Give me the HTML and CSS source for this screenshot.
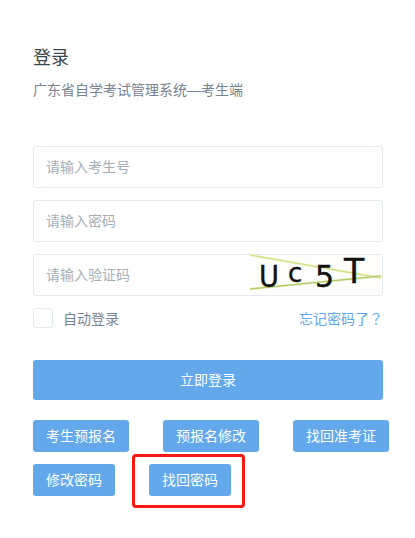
FILE: index.html
```html
<!DOCTYPE html>
<html lang="zh-CN">
<head>
  <meta charset="UTF-8">
  <title>登录</title>
  <link rel="stylesheet" href="styles.css">
</head>
<body>
  <div class="login">
    <h1>登录</h1>
    <p class="subtitle">广东省自学考试管理系统—考生端</p>

    <form class="fields">
      <div class="field"><span class="hint">请输入考生号</span></div>
      <div class="field"><span class="hint">请输入密码</span></div>
      <div class="field">
        <span class="hint">请输入验证码</span>
        <svg class="captcha" width="133" height="40" viewBox="0 0 133 40">
          <rect width="133" height="40" rx="2" fill="#fdfdfb"/>
          <path d="M1 0 L132 23" stroke="#eef2c4" stroke-width="2.4" fill="none"/>
          <path d="M1 0 L132 23" stroke="#cfdc78" stroke-width="1" fill="none"/>
          <path d="M1 34 L132 21" stroke="#e0ebb8" stroke-width="2.4" fill="none"/>
          <path d="M1 34 L132 21" stroke="#a8c45a" stroke-width="1" fill="none"/>
          <text class="cap-big" x="10" y="32" textLength="20" lengthAdjust="spacingAndGlyphs">U</text>
          <text class="cap-small" x="39" y="27">c</text>
          <text class="cap-big" x="66" y="32">5</text>
          <text class="cap-t" x="95" y="28">T</text>
        </svg>
      </div>
    </form>

    <div class="options">
      <label class="auto"><span class="check"></span>自动登录</label>
      <a class="forgot">忘记密码了<span class="mark" lang="zh-TW">？</span></a>
    </div>

    <div class="submit">立即登录</div>

    <div class="links">
      <a class="btn">考生预报名</a>
      <a class="btn">预报名修改</a>
      <a class="btn">找回准考证</a>
      <a class="btn">修改密码</a>
      <a class="btn marked">找回密码</a>
    </div>
  </div>
</body>
</html>
```

FILE: styles.css
```css
body {
  margin: 0;
  background: #fff;
  font-family: "Liberation Sans", "Noto Sans CJK SC", sans-serif;
  font-size: 14px;
  color: #76838f;
}
.login {
  width: 350px;
  padding: 46px 0 42px 33px;
}
h1 {
  margin: 0;
  font-size: 18px;
  font-weight: 400;
  line-height: 24px;
  color: #37474f;
}
.subtitle {
  margin: 10px 0 0;
  line-height: 20px;
}
.fields {
  display: flex;
  flex-direction: column;
  gap: 12px;
  margin-top: 46px;
}
.field {
  position: relative;
  display: flex;
  align-items: center;
  height: 42px;
  box-sizing: border-box;
  padding: 0 0 2px 12px;
  border: 1px solid #e4eaec;
  border-radius: 3px;
}
.hint {
  color: #a3afb7;
}
.captcha {
  position: absolute;
  right: 0;
  top: 0;
  overflow: visible;
}
.cap-big, .cap-small, .cap-t {
  font-family: "DejaVu Sans", sans-serif;
  fill: #111;
  stroke: #111;
  stroke-width: 0.4;
}
.cap-big {
  font-size: 30px;
}
.cap-small {
  font-size: 26px;
}
.cap-t {
  font-size: 33px;
}
.options {
  display: flex;
  justify-content: space-between;
  align-items: center;
  height: 20px;
  margin-top: 12px;
}
.auto {
  display: flex;
  align-items: center;
  gap: 10px;
}
.check {
  width: 20px;
  height: 20px;
  box-sizing: border-box;
  border: 1px solid #e4eaec;
  border-radius: 3px;
}
.forgot {
  color: #62a8ea;
}
.mark {
  font-family: "Noto Sans CJK TC", sans-serif;
}
.submit {
  height: 40px;
  margin-top: 32px;
  border-radius: 3px;
  background: #62a8ea;
  color: #fff;
  line-height: 40px;
  text-align: center;
}
.links {
  display: flex;
  flex-wrap: wrap;
  gap: 12px 34px;
  width: 370px;
  margin-top: 20px;
}
.btn {
  position: relative;
  height: 32px;
  padding: 0 13px;
  border-radius: 3px;
  background: #62a8ea;
  color: #fff;
  line-height: 32px;
}
.marked::after {
  content: "";
  position: absolute;
  left: -17px;
  top: -10px;
  width: 113px;
  height: 54px;
  box-sizing: border-box;
  border: 3px solid #f5190f;
  border-radius: 4px;
}
```
